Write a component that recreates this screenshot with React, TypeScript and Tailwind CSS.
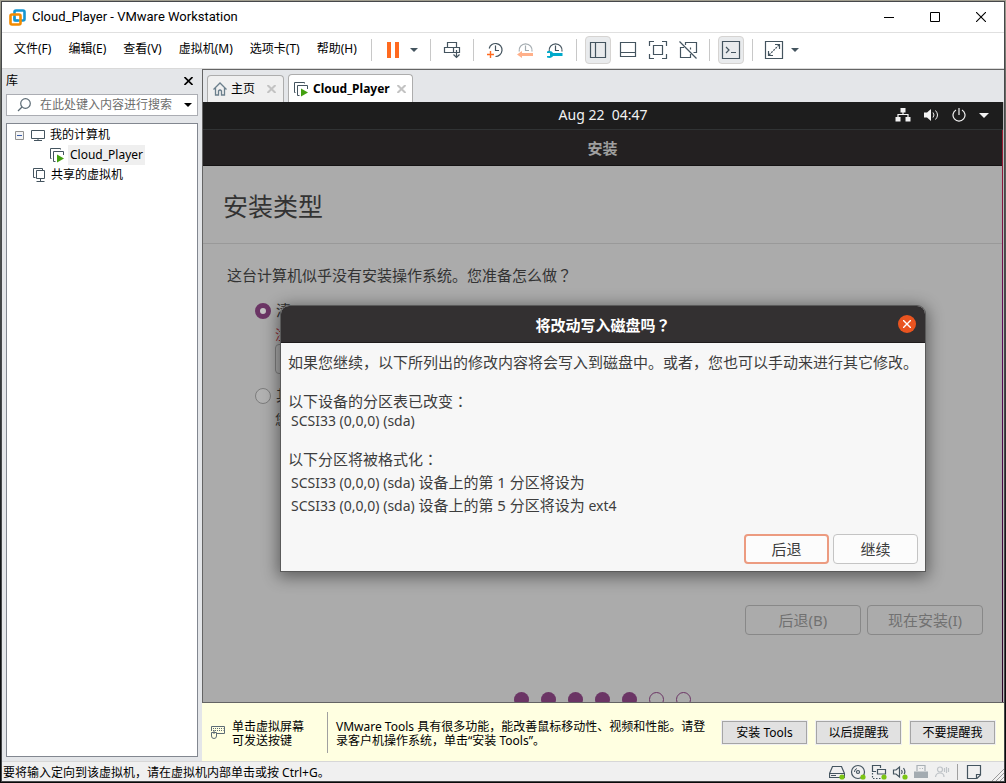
import React from "react";

const GREEN = "#43a010";

function Sep() {
  return <div className="mx-2 h-[22px] w-px bg-[#c8c8c8]" />;
}

function Tool({ label, active, children }: { label: string; active?: boolean; children: React.ReactNode }) {
  return (
    <button
      aria-label={label}
      className={
        active
          ? "flex h-7 w-[26px] items-center justify-center rounded-sm border border-[#d6d4d2] bg-[#e9ebed]"
          : "flex h-7 w-[26px] items-center justify-center"
      }
    >
      {children}
    </button>
  );
}

function Caret({ label, color }: { label: string; color: string }) {
  return (
    <button aria-label={label} className="flex h-7 w-4 items-center justify-center">
      <svg width="8" height="4" viewBox="0 0 8 4" fill={color}>
        <path d="M0 0h8L4 4z" />
      </svg>
    </button>
  );
}

function Icon({ size = 20, color = "#44545f", children }: { size?: number; color?: string; children: React.ReactNode }) {
  return (
    <svg width={size} height={size} viewBox={`0 0 ${size} ${size}`} fill="none" stroke={color} strokeWidth="1.2" className="shrink-0">
      {children}
    </svg>
  );
}

function Clock({ color }: { color: string }) {
  return (
    <g stroke={color}>
      <path d="M4.2 11.5A6.5 6.5 0 1 1 17 11.5" />
      <path d="M10.5 5.5V10.500H14" />
    </g>
  );
}

function VmIcon() {
  return (
    <svg width="16" height="16" viewBox="0 0 16 16" fill="none" className="shrink-0">
      <path d="M2.5 11.5H1.5V1.5H11.500V2.500" stroke="#44545f" />
      <path d="M6.500 14.500H4.500V4.500H14.500V8" stroke="#44545f" />
      <path d="M8 7.500 15 11.500 8 15.500z" fill={GREEN} />
    </svg>
  );
}

function LogoIcon() {
  return (
    <svg width="17" height="17" viewBox="0 0 17 17" fill="none" className="shrink-0">
      <rect x="5.500" y="1.500" width="10" height="10" rx="1.500" stroke="#1696d2" strokeWidth="2.600" />
      <rect x="1.500" y="5.500" width="10" height="10" rx="1.500" stroke="#f38b00" strokeWidth="2.600" />
      <path d="M5.500 8V11.500H9" stroke="#1696d2" strokeWidth="2" />
    </svg>
  );
}

/* Full-width punctuation centred in its cell */
function Mark({ children }: { children: string }) {
  return <span className="font-['Noto_Sans_CJK_JP',sans-serif] leading-none">{children}</span>;
}

const menus = ["文件(F)", "编辑(E)", "查看(V)", "虚拟机(M)", "选项卡(T)", "帮助(H)"];

function TitleBar() {
  return (
    <header className="flex h-[31px] items-center border-b border-[#e0e0e0] bg-white pl-[7px]">
      <LogoIcon />
      <h1 className="ml-1.5 flex-1 font-['Roboto',sans-serif] text-[13px] text-black">Cloud_Player - VMware Workstation</h1>
      <button aria-label="最小化" className="flex h-full w-[46px] items-center justify-center">
        <svg width="10" height="10" stroke="#000"><path d="M0 5.500H10" /></svg>
      </button>
      <button aria-label="最大化" className="flex h-full w-[46px] items-center justify-center">
        <svg width="10" height="10" fill="none" stroke="#000"><path d="M.5 .5H9.500V9.500H.5z" /></svg>
      </button>
      <button aria-label="关闭" className="flex h-full w-[46px] items-center justify-center">
        <svg width="10" height="10" stroke="#000" strokeWidth="1.100"><path d="M0 0 10 10M10 0 0 10" /></svg>
      </button>
    </header>
  );
}

function ToolBar() {
  return (
    <div className="flex h-9 items-center border-b border-[#d9d9d9] bg-white pb-px pl-3">
      <nav className="flex w-[349px] shrink-0 gap-[17px] pb-0.5 text-xs whitespace-nowrap text-black">
        {menus.map((m) => (
          <button key={m}>{m}</button>
        ))}
      </nav>
      <Sep />
      <Tool label="挂起">
        <svg width="12" height="16" fill="#ff6a1f"><path d="M0 0h4v16H0zM8 0h4v16H8z" /></svg>
      </Tool>
      <Caret label="电源选项" color="#44545f" />
      <Sep />
      <Tool label="发送组合键">
        <Icon>
          <path d="M5.500 7.500V2.500H14.500V7.500M2.500 7.500H17.500V12.500H2.500zM11.500 7.500V12.500" />
          <path d="M14.500 10V17.500M11.500 14.500 14.500 17.500 17.500 14.500" />
        </Icon>
      </Tool>
      <Sep />
      <div className="flex gap-1">
        <Tool label="拍摄快照">
          <Icon>
            <path d="M4.200 8.500A6.500 6.500 0 1 1 10.500 16.500M10.500 5.500V10.500H14" />
            <path d="M2 14.500H9M5.500 11V18" stroke="#ff6a1f" strokeWidth="1.400" />
          </Icon>
        </Tool>
        <Tool label="恢复快照">
          <Icon>
            <Clock color="#a4acb1" />
            <path d="M2 14.500 7 11V13H18V16H7V18z" fill="#ffb08a" stroke="none" />
          </Icon>
        </Tool>
        <Tool label="管理快照">
          <Icon>
            <Clock color="#44545f" />
            <path d="M2 11.500C5 10.500 7.500 11.500 8 13H17.500V16H8C7.500 17.500 5 18.500 2 17.500L2 16H5V13H2z" fill="#00aacb" stroke="none" />
          </Icon>
        </Tool>
      </div>
      <Sep />
      <div className="flex gap-1">
        <Tool label="显示库" active>
          <Icon><path d="M2.500 2.500H17.500V17.500H2.500zM7.500 2.500V17.500" /></Icon>
        </Tool>
        <Tool label="显示缩略图栏">
          <Icon><path d="M2.500 2.500H17.500V16.500H2.500zM2.500 12.500H17.500" /></Icon>
        </Tool>
        <Tool label="全屏">
          <Icon><path d="M1.500 6V1.500H6M14 1.500H18.500V6M18.500 14V18.500H14M6 18.500H1.500V14M5.500 5.500H14.500V14.500H5.500z" /></Icon>
        </Tool>
        <Tool label="Unity">
          <Icon>
            <path d="M1.500 1.500 18.500 18.500M7.500 5V2.500H18.500V12.500H15.500M6 7.500H2.500V17.500H12.500V14M12.500 9.500V7.500" />
          </Icon>
        </Tool>
      </div>
      <Sep />
      <Tool label="控制台视图" active>
        <Icon><path d="M1.500 1.500H18.500V18.500H1.500zM5 7 8 10 5 13M10 12.500H15" /></Icon>
      </Tool>
      <Sep />
      <Tool label="自由拉伸">
        <Icon>
          <path d="M1.500 1.500H18.500V18.500H1.500zM11 4.500H15.500V9M9 15.500H4.500V11" />
          <path d="M15 5 5 15" strokeDasharray="2 1" />
        </Icon>
      </Tool>
      <Caret label="拉伸选项" color="#44545f" />
    </div>
  );
}

function Sidebar() {
  return (
    <aside className="flex w-[200px] shrink-0 flex-col bg-[#e4e6e9] pr-1 pb-1 pl-1 text-xs text-black">
      <div className="flex h-[25px] items-center justify-between pr-[5px] pb-0.5">
        <h2>库</h2>
        <button aria-label="关闭库">
          <svg width="9" height="8" stroke="#000" strokeWidth="1.600"><path d="M.5 0 8.500 8M8.500 0 .5 8" /></svg>
        </button>
      </div>
      <div className="flex h-[22px] items-center border border-[#abadb3] bg-white pr-[5px] pl-2.5">
        <svg width="16" height="16" fill="none" stroke="#5c6b75" strokeWidth="1.200" className="shrink-0">
          <circle cx="8.500" cy="6.500" r="4.800" />
          <path d="M5 10 1 14" />
        </svg>
        <input
          aria-label="搜索"
          placeholder="在此处键入内容进行搜索"
          className="ml-[7px] w-0 flex-1 bg-transparent outline-none placeholder:text-[#6d6d6d]"
        />
        <svg width="8" height="4"><path d="M0 0h8L4 4z" /></svg>
      </div>
      <ul className="mt-[7px] flex-1 border border-[#828790] bg-white pt-px">
        <li className="flex h-5 items-center pl-2">
          <svg width="9" height="9" fill="#f4f4f4" stroke="#919191">
            <path d="M.5 .5H8.500V8.500H.5z" />
            <path d="M2 4.500H7" stroke="#3b5ea8" />
          </svg>
          <svg width="16" height="16" fill="none" stroke="#44545f" className="mr-1 ml-1.5">
            <path d="M1.500 3.500H14.500V11.500H1.500zM8 11.500V13.500M4 13.500H12" />
          </svg>
          我的计算机
        </li>
        <li className="flex h-5 items-center pl-[42px]">
          <VmIcon />
          <span className="ml-[3px] h-5 bg-[#efefef] px-0.5 leading-5">Cloud_Player</span>
        </li>
        <li className="flex h-5 items-center pl-6">
          <svg width="16" height="16" fill="none" stroke="#44545f" className="mr-1">
            <path d="M4.500 10.500H2.500V1.500H11.500V3.500M5.500 3.500H13.500V11.500H5.500zM9.500 11.500V14.500M5.500 14.500H13.500" />
          </svg>
          共享的虚拟机
        </li>
      </ul>
    </aside>
  );
}

function TabClose({ label }: { label: string }) {
  return (
    <button aria-label={label}>
      <svg width="9" height="8" stroke="#c3c3c3" strokeWidth="2"><path d="M.5 0 8.500 8M8.500 0 .5 8" /></svg>
    </button>
  );
}

function Tabs() {
  return (
    <div className="flex h-8 items-end gap-1 bg-[#e4e6e9] pl-1 text-xs text-black">
      <div className="flex h-[27px] items-center rounded-t-sm border border-b-0 border-[#adadad] bg-[#f0f0f0] pr-[7px] pl-[5px]">
        <svg width="14" height="14" fill="none" stroke="#6b7f8c" strokeWidth="1.300">
          <path d="M.5 7.500 7 1 13.500 7.500M2.500 6V13H5.500V9Q7 7 8.500 9V13H11.500V6" />
        </svg>
        <button className="mr-3 ml-1">主页</button>
        <TabClose label="关闭主页" />
      </div>
      <div className="flex h-7 items-center rounded-t-sm border border-b-0 border-[#adadad] bg-white pr-1.5 pl-1">
        <VmIcon />
        <button className="mr-[7px] ml-1 font-bold">Cloud_Player</button>
        <TabClose label="关闭 Cloud_Player" />
      </div>
    </div>
  );
}

function PanelBar() {
  return (
    <div className="grid h-7 grid-cols-[1fr_auto_1fr] items-center border-b border-[#303334] bg-[#1d1d1d] pb-px text-[#f2f2f2]">
      <span />
      <time className="text-sm whitespace-pre">Aug 22  04:47</time>
      <div className="flex items-center justify-end gap-[13px] pr-3.5">
        <svg width="16" height="14" fill="#f2f2f2">
          <path d="M5.500 0h5v4.500h-5zM.5 9h5v4.500h-5zM10.500 9h5v4.500h-5z" />
          <path d="M8 4V6.500M3 9V6.500H13V9" fill="none" stroke="#f2f2f2" strokeWidth="1.200" />
        </svg>
        <svg width="15" height="14" fill="none" stroke="#f2f2f2">
          <path d="M0 4.500h3L7 1v12L3 9.500H0z" fill="#f2f2f2" stroke="none" />
          <path d="M9 4.500Q11 7 9 9.500M11.500 2.500Q15.500 7 11.500 11.500" />
        </svg>
        <svg width="14" height="14" fill="none" stroke="#f2f2f2" strokeWidth="1.200">
          <path d="M4 1.900A6 6 0 1 0 10 1.900M7 0V7" />
        </svg>
        <svg width="10" height="5" fill="#f2f2f2"><path d="M0 0h10L5 5z" /></svg>
      </div>
    </div>
  );
}

const dots = [true, true, true, true, true, false, false];

const radio =
  "size-4 shrink-0 appearance-none rounded-full border border-[#7d7d7d] bg-[#b2b2b2] checked:border-[5px] checked:border-[#6b3565] checked:bg-[#c4c4c4]";
const lowButton = "h-[30px] w-[116px] rounded border border-[#888] text-[15px] text-[#717171]";
const dialogButton = "h-[30px] w-[85px] rounded bg-[#fcfcfc] text-[15px] text-[#3d3d3d]";

function Installer() {
  return (
    <section className="flex min-h-0 flex-1 flex-col overflow-hidden bg-[#ababab] text-[15px] whitespace-nowrap text-[#333]">
      <h2 className="flex h-9 shrink-0 items-center justify-center border-b border-[#151314] bg-[#232021] pt-px font-bold text-[#a0a0a0]">安装</h2>
      <h3 className="flex h-[78px] shrink-0 items-center border-b border-[#999] px-5 pt-1 text-[25px]">安装类型</h3>
      <p className="mt-5 ml-6 leading-[23px]">
        这台计算机似乎没有安装操作系统。您准备怎么做<Mark>？</Mark>
      </p>
      <div className="mt-3 ml-[52px] flex flex-col gap-2.5">
        <div>
          <label className="flex h-[23px] items-center gap-[5px]">
            <input type="radio" name="kind" defaultChecked className={radio} />
            清
          </label>
          <p className="ml-5 h-[23px] text-[13px] leading-6 text-[#8b1f2b]">注</p>
          <button aria-label="高级特性" className="mt-[-1px] ml-5 block h-[30px] w-[200px] rounded border border-[#7d7d7d]" />
        </div>
        <div>
          <label className="flex h-[23px] items-center gap-[5px]">
            <input type="radio" name="kind" className={radio} />
            其
          </label>
          <p className="ml-5 text-[13px] leading-6">您</p>
        </div>
      </div>
      <div className="mt-auto flex justify-end gap-1.5 pr-[19px]">
        <button className={lowButton}>后退(B)</button>
        <button className={lowButton}>现在安装(I)</button>
      </div>
      <div className="mt-[57px] flex h-2.5 shrink-0 justify-center gap-3 overflow-hidden">
        {dots.map((on, i) => (
          <span
            key={i}
            className={
              on
                ? "size-[15px] rounded-full bg-[#6b3565]"
                : "size-[15px] rounded-full border border-[#6b3565]"
            }
          />
        ))}
      </div>
    </section>
  );
}

function Device({ index, suffix }: { index: number; suffix?: string }) {
  return (
    <p className="h-[23px] pl-[3px]">
      <span className="text-sm leading-none">SCSI33 (0,0,0) (sda) </span>
      设备上的第 {index} 分区将设为{suffix && <span className="text-sm leading-none"> {suffix}</span>}
    </p>
  );
}

function Dialog() {
  return (
    <div className="absolute inset-x-0 top-[204px] flex justify-center">
      <div
        role="dialog"
        aria-label="将改动写入磁盘吗？"
        className="w-[644px] overflow-hidden rounded-t-lg bg-[#f7f7f7] text-[15px] text-[#3d3d3d] shadow-[0_0_0_1px_#5a5a5a,0_3px_16px_3px_rgba(0,0,0,0.45)]"
      >
        <div className="grid h-[37px] grid-cols-[1fr_auto_1fr] items-center border-b border-[#1f1c1d] bg-[#333031] text-white">
          <span />
          <h2 className="pt-0.5 font-bold">
            将改动写入磁盘吗<Mark>？</Mark>
          </h2>
          <button aria-label="关闭" className="mr-[9px] flex size-[18px] items-center justify-center justify-self-end rounded-full bg-[#e95420]">
            <svg width="8" height="8" stroke="#fff" strokeWidth="1.400"><path d="M0 0 8 8M8 0 0 8" /></svg>
          </button>
        </div>
        <div className="flex flex-col gap-[17px] px-[7px] pt-2 pb-[7px] whitespace-nowrap">
          <p className="leading-[23px]">如果您继续，以下所列出的修改内容将会写入到磁盘中。或者，您也可以手动来进行其它修改。</p>
          <div className="leading-5">
            <p>
              以下设备的分区表已改变<Mark>：</Mark>
            </p>
            <p className="pl-[3px] text-sm leading-5">SCSI33 (0,0,0) (sda)</p>
          </div>
          <div className="leading-[23px]">
            <p>
              以下分区将被格式化<Mark>：</Mark>
            </p>
            <Device index={1} />
            <Device index={5} suffix="ext4" />
          </div>
          <div className="flex justify-end gap-1">
            <button className={`${dialogButton} border-2 border-[#ec9b80]`}>后退</button>
            <button className={`${dialogButton} border border-[#c4c4c4]`}>继续</button>
          </div>
        </div>
      </div>
    </div>
  );
}

const hintButton =
  "h-[23px] w-[85px] border border-[#a5a5a5] bg-[#e1e1e1] pt-px text-xs leading-5 shadow-[0_0_0_1px_#f0f0f0] whitespace-nowrap";

function HintBar() {
  return (
    <div className="flex h-[58px] shrink-0 items-center bg-[#ffffe1] pr-[9px] pl-2 text-xs leading-[14px] whitespace-nowrap text-black">
      <svg width="16" height="16" fill="none" stroke="#5c6b75" className="shrink-0">
        <path d="M1.500 7V2.500H14.500V9.500H7" />
        <path d="M3 4.500H13.500M3 6.500H13.500" strokeDasharray="1 1" />
        <path d="M1.500 10V8.500H6.500V12A2.500 2.500 0 0 1 1.500 12zM4 6V10" />
      </svg>
      <p className="ml-1.5 pt-1">
        单击虚拟屏幕
        <br />
        可发送按键
      </p>
      <div className="mr-2 ml-[23px] h-[41px] w-px bg-[#a0a0a0]" />
      <p className="flex-1 pt-1">
        VMware Tools 具有很多功能，能改善鼠标移动性、视频和性能。请登
        <br />
        录客户机操作系统，单击“安装 Tools”。
      </p>
      <div className="flex gap-[9px]">
        <button className={hintButton}>安装 Tools</button>
        <button className={hintButton}>以后提醒我</button>
        <button className={hintButton}>不要提醒我</button>
      </div>
    </div>
  );
}

function Led() {
  return <circle cx="13" cy="13" r="2.600" fill="#7cc514" stroke="none" />;
}

function StatusBar() {
  return (
    <footer className="flex h-5 shrink-0 items-center border-t border-[#d7d7d7] bg-[#f0f0f0] pl-px text-xs text-black">
      <p className="flex-1 pt-0.5">要将输入定向到该虚拟机，请在虚拟机内部单击或按 Ctrl+G。</p>
      <div className="flex gap-[5px]">
        <Icon size={16}><path d="M3.500 2.500H12.500L15.500 9.500V13.500H.5V9.500zM.5 9.500H15.500M2 11.500H7" /><Led /></Icon>
        <Icon size={16}><circle cx="8" cy="8" r="6.500" /><circle cx="8" cy="8" r="1.500" /><path d="M4.500 8A3.500 3.500 0 0 1 7 4.500" strokeWidth="1" /><Led /></Icon>
        <Icon size={16}><path d="M5 7.500H1.500V1.500H9.500V4M6.500 5.500H14.500V10H6.500z" /><path d="M1.500 9V14.500H10" strokeDasharray="1.500 1.500" /><Led /></Icon>
        <Icon size={16}><path d="M1.500 6H4L7.500 3V13L4 10H1.500zM9.500 6Q11 8 9.500 10M11.500 4Q14 8 12 10" /><Led /></Icon>
        <Icon size={16} color="#a9b0b5"><path d="M4 7V1.500H12V7M6.500 4.500H7.500M9 4.500H10" /><path d="M1 7.500H15V14H1z" fill="#a3abb1" stroke="none" /></Icon>
        <Icon size={16} color="#bfc4c8"><circle cx="6" cy="5.500" r="2.500" /><path d="M1.500 13Q2 9 6 9T10 13M10.500 4V8M12.500 3V9M14.500 4V8" /></Icon>
      </div>
      <div className="mr-2 ml-[7px] h-4 w-px bg-[#a0a0a0]" />
      <Icon size={16}><path d="M1.500 1.500H14.500V11L11 14.500H1.500zM14.500 10.500H10.500V14.500" /></Icon>
      <svg width="12" height="12" stroke="#9a9a9a" className="mt-[7px] ml-2.5"><path d="M0 12 12 0M4 12 12 4M8 12 12 8" /></svg>
    </footer>
  );
}

export default function App() {
  return (
    <div className="flex h-screen flex-col bg-[linear-gradient(180deg,#a29f90_0%,#6b6d66_10%,#3c4042_45%,#0d1012_75%,#0a0a0a_100%)] p-px font-['Noto_Sans','Noto_Sans_CJK_SC',sans-serif]">
      <div className="flex min-h-0 flex-1 flex-col border border-[#46484a]">
        <TitleBar />
        <ToolBar />
        <div className="flex min-h-0 flex-1">
          <Sidebar />
          <main className="flex min-w-0 flex-1 flex-col">
            <div className="flex min-h-0 flex-1 flex-col border-t border-b border-l border-[#646464]">
              <Tabs />
              <div className="relative flex min-h-0 flex-1 flex-col border-r border-[#b8b8b8]">
                <PanelBar />
                <div className="flex min-h-0 flex-1 bg-[linear-gradient(180deg,#a01c30,#5e0a5a_35%,#2c0526)] pr-px">
                  <div className="flex min-w-0 flex-1 flex-col">
                    <Installer />
                  </div>
                </div>
                <Dialog />
              </div>
            </div>
            <HintBar />
          </main>
        </div>
        <StatusBar />
      </div>
    </div>
  );
}
